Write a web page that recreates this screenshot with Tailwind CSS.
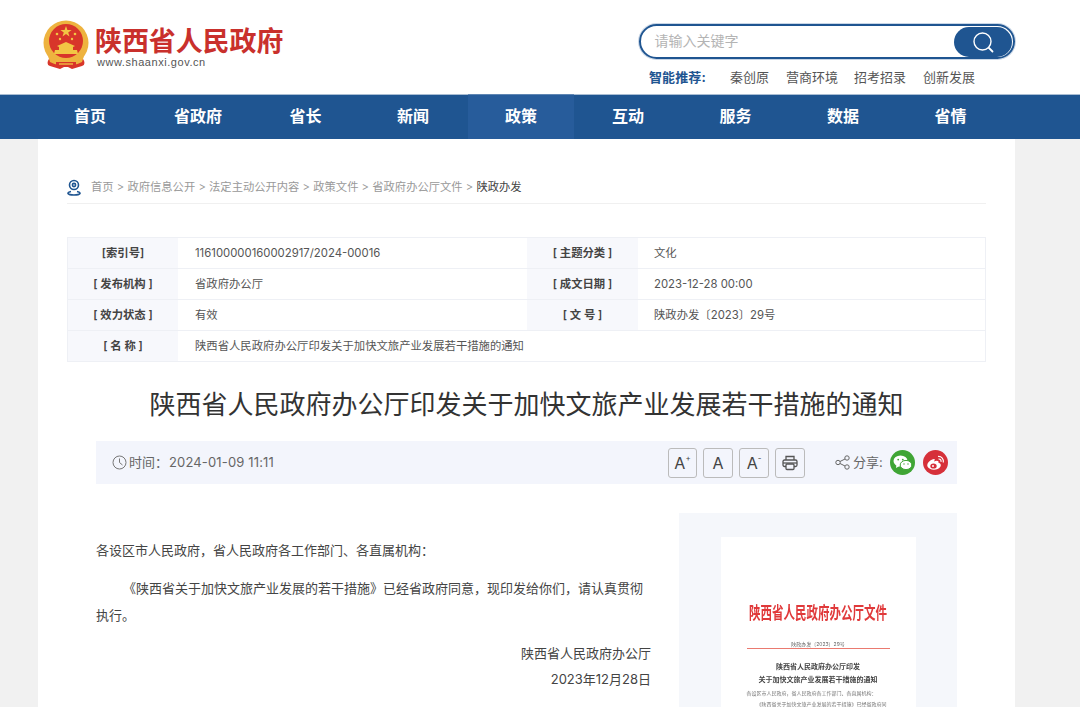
<!DOCTYPE html>
<html lang="zh-CN">

<head>
    <meta charset="UTF-8">
    <title>陕西省人民政府</title>
    <script src="https://cdn.jsdelivr.net/npm/@tailwindcss/browser@4"></script>
</head>

<body class="bg-[#f1f1f1] font-['Inter','Noto_Sans_CJK_SC',sans-serif] text-[#555] h-[707px] overflow-hidden">
    <!-- header -->
    <header class="bg-white h-[94px] flex justify-between pl-[42px] pr-[65px]">
        <div class="flex items-start pt-[20px]">
            <svg class="w-[48px] h-[50px]" viewBox="0 0 48 50">
                <path d="M8 37 Q3 45 8 46 L18 49 L24 46 L30 49 L40 46 Q45 45 40 37 Z" fill="#d8352a" />
                <circle cx="24" cy="23" r="22.5" fill="#eeb33f" />
                <circle cx="24" cy="21" r="17" fill="#d8352a" />
                <path d="M24 6 l1.4 4 4.2 0 -3.4 2.5 1.3 4 -3.5 -2.5 -3.5 2.5 1.3 -4 -3.4 -2.5 4.2 0 z" fill="#f2c644" />
                <circle cx="15" cy="14" r="1.3" fill="#f2c644" />
                <circle cx="33" cy="14" r="1.3" fill="#f2c644" />
                <circle cx="18" cy="19" r="1.2" fill="#f2c644" />
                <circle cx="30" cy="19" r="1.2" fill="#f2c644" />
                <path d="M15 26 L24 22 L33 26 L31 27 L31 30 L35 30 L36 34 L12 34 L13 30 L17 30 L17 27 Z" fill="#f2c644" />
                <path d="M6 36 Q24 48 42 36 L40 42 Q24 50 8 42 Z" fill="#eeb33f" />
                <path d="M14 42 h20 v5 h-20 z" fill="#d8352a" />
                <path d="M17 44 h14" stroke="#eeb33f" stroke-width="1.5" />
            </svg>
            <div class="ml-[5px] pt-[2px]">
                <div class="text-[27px] leading-[40px] font-bold text-[#c9302c] tracking-[-0.1px]">陕西省人民政府</div>
                <div class="font-['Liberation_Sans'] text-[11px] leading-[12px] tracking-[0.55px] text-[#555] ml-[2px] -mt-[6px]">www.shaanxi.gov.cn</div>
            </div>
        </div>
        <div class="pt-[24px] w-[376px]">
            <div class="h-[35px] rounded-full border-[2.5px] border-[#1f5591] shadow-[0_0_0_1px_#c9d6e6] flex items-center justify-between pl-[13.5px] pr-[1px]">
                <span class="text-[14px] leading-[18px] -mt-[2px] text-[#b4b4b4]">请输入关键字</span>
                <span class="w-[58px] h-[30px] rounded-full bg-[#1f5591] flex items-center justify-center">
                    <svg class="w-[24px] h-[24px]" viewBox="0 0 24 24" fill="none" stroke="#fff" stroke-width="1.4">
                        <circle cx="11.5" cy="11.5" r="8.5" />
                        <path d="M18 18 L21.5 21.5" stroke-width="1.8" stroke-linecap="round" />
                    </svg>
                </span>
            </div>
            <div class="flex items-center mt-[9px] ml-[10px] text-[13px] leading-[18px] text-[#555]">
                <span class="font-bold text-[#1f5591] w-[81px] tracking-[0.1px]">智能推荐:</span>
                <span class="w-[56px]">秦创原</span>
                <span class="w-[68px]">营商环境</span>
                <span class="w-[69px]">招考招录</span>
                <span>创新发展</span>
            </div>
        </div>
    </header>

    <!-- nav -->
    <nav class="bg-[#1f5591] h-[45px] border-t border-[#a9bdd3] flex pl-[36px] pb-[2px] text-white font-bold text-[16px]">
        <a class="w-[108px] flex items-center justify-center">首页</a>
        <a class="w-[108px] flex items-center justify-center">省政府</a>
        <a class="w-[107px] flex items-center justify-center">省长</a>
        <a class="w-[109px] pr-px flex items-center justify-center">新闻</a>
        <a class="w-[106px] h-[45px] -mt-[1px] pb-[2px] bg-[#275c9b] border-t border-[#5f86b3] flex items-center justify-center">政策</a>
        <a class="w-[108px] flex items-center justify-center">互动</a>
        <a class="w-[107px] flex items-center justify-center">服务</a>
        <a class="w-[108px] flex items-center justify-center">数据</a>
        <a class="w-[107px] flex items-center justify-center">省情</a>
    </nav>

    <!-- content -->
    <main class="bg-white w-[977px] ml-[38px] h-[568px] overflow-hidden">
        <div class="mx-[29px] pt-[39px] h-[65px]">
            <div class="flex items-center h-[26px] border-b border-[#f0f0f0] pb-[6px] text-[11.3px] text-[#999]">
                <svg class="w-[14px] h-[17px] mr-[10px]" viewBox="0 0 14 17" fill="none" stroke="#1f5591" stroke-width="1.6">
                    <circle cx="7" cy="6" r="4.5" />
                    <circle cx="7" cy="6" r="1.6" />
                    <path d="M4 12.5 Q1 13 1 14.5 Q2 16 7 16 Q12 16 13 14.5 Q13 13 10 12.5" />
                </svg>
                <span>首页 &gt; 政府信息公开 &gt; 法定主动公开内容 &gt; 政策文件 &gt; 省政府办公厅文件 &gt; <b class="font-normal text-[#444]">陕政办发</b></span>
            </div>
        </div>

        <div class="mx-[29px] mt-[33px] grid grid-cols-[110px_349px_111px_1fr] border border-[#eef0f5] text-[11.35px] leading-[30px] text-[#555]">
            <div class="bg-[#f7f8fc] text-center font-semibold text-[#444] border-b border-[#eef0f5]">[索引号]</div>
            <div class="pl-[17px] border-b border-[#eef0f5]">116100000160002917/2024-00016</div>
            <div class="bg-[#f7f8fc] text-center font-semibold text-[#444] border-b border-[#eef0f5] whitespace-pre">[ 主题分类 ]</div>
            <div class="pl-[16px] border-b border-[#eef0f5]">文化</div>

            <div class="bg-[#f7f8fc] text-center font-semibold text-[#444] border-b border-[#eef0f5] whitespace-pre">[ 发布机构 ]</div>
            <div class="pl-[17px] border-b border-[#eef0f5]">省政府办公厅</div>
            <div class="bg-[#f7f8fc] text-center font-semibold text-[#444] border-b border-[#eef0f5] whitespace-pre">[ 成文日期 ]</div>
            <div class="pl-[16px] border-b border-[#eef0f5]">2023-12-28 00:00</div>

            <div class="bg-[#f7f8fc] text-center font-semibold text-[#444] border-b border-[#eef0f5] whitespace-pre">[ 效力状态 ]</div>
            <div class="pl-[17px] border-b border-[#eef0f5]">有效</div>
            <div class="bg-[#f7f8fc] text-center font-semibold text-[#444] border-b border-[#eef0f5] whitespace-pre">[ 文 号 ]</div>
            <div class="pl-[16px] border-b border-[#eef0f5]">陕政办发〔2023〕29号</div>

            <div class="bg-[#f7f8fc] text-center font-semibold text-[#444] whitespace-pre">[ 名 称 ]</div>
            <div class="pl-[17px] col-span-3">陕西省人民政府办公厅印发关于加快文旅产业发展若干措施的通知</div>
        </div>

        <h1 class="text-[26px] leading-[36px] mt-[25px] ml-[29px] w-[919px] text-center font-normal text-[#333]">陕西省人民政府办公厅印发关于加快文旅产业发展若干措施的通知</h1>

        <div class="mx-[58px] mt-[18px] h-[43px] bg-[#f3f5fc] flex items-center pl-[16px] pr-[9px] text-[13px] text-[#666]">
            <svg class="w-[15px] h-[15px] mr-[2px]" viewBox="0 0 15 15" fill="none" stroke="#777" stroke-width="1">
                <circle cx="7.5" cy="7.5" r="6.5" />
                <path d="M7.5 3.5 V7.5 L10.5 10" />
            </svg>
            <span>时间：<span class="tracking-[0.15px] ml-px">2024-01-09 11:11</span></span>
            <div class="ml-auto flex items-center">
                <div class="flex gap-[6px] text-[#444]">
                    <span class="w-[29px] h-[30px] border border-[#bbb] rounded-[3px] flex items-center justify-center text-[16px]">A<sup class="text-[8px] -mt-[2px]">+</sup></span>
                    <span class="w-[30px] h-[30px] border border-[#bbb] rounded-[3px] flex items-center justify-center text-[16px]">A</span>
                    <span class="w-[30px] h-[30px] border border-[#bbb] rounded-[3px] flex items-center justify-center text-[16px]">A<sup class="text-[8px] -mt-[2px]">-</sup></span>
                    <span class="w-[30px] h-[30px] border border-[#bbb] rounded-[3px] flex items-center justify-center">
                        <svg class="w-[16px] h-[16px]" viewBox="0 0 16 16" fill="none" stroke="#555" stroke-width="1.3">
                            <path d="M4 5 V1.5 H12 V5" />
                            <rect x="1" y="5" width="14" height="6.5" rx="1.5" />
                            <path d="M1 8 H15" />
                            <rect x="4" y="9" width="8" height="5.5" rx="1" fill="#f3f5fc" />
                        </svg>
                    </span>
                </div>
                <svg class="w-[15px] h-[15px] ml-[30px] mr-[3px]" viewBox="0 0 15 15" fill="none" stroke="#666" stroke-width="1">
                    <circle cx="3" cy="7.5" r="2.2" />
                    <circle cx="12" cy="3" r="2.2" />
                    <circle cx="12" cy="12" r="2.2" />
                    <path d="M5 6.5 L10 4 M5 8.5 L10 11" />
                </svg>
                <span class="w-[37px]">分享:</span>
                <span class="w-[25px] h-[25px] rounded-full bg-[#3fa535] flex items-center justify-center">
                    <svg class="w-[19px] h-[16px]" viewBox="0 0 19 16" fill="#fff">
                        <ellipse cx="7.5" cy="6" rx="7" ry="5.6" />
                        <path d="M3.5 9.5 L3 13 L6.5 11 Z" />
                        <ellipse cx="13" cy="10" rx="5.8" ry="4.6" stroke="#3fa535" stroke-width="1" />
                        <circle cx="5.2" cy="4.6" r="0.9" fill="#3fa535" />
                        <circle cx="9.8" cy="4.6" r="0.9" fill="#3fa535" />
                        <circle cx="11" cy="9" r="0.7" fill="#3fa535" />
                        <circle cx="15" cy="9" r="0.7" fill="#3fa535" />
                    </svg>
                </span>
                <span class="w-[25px] h-[25px] ml-[8px] rounded-full bg-[#d6303a] flex items-center justify-center">
                    <svg class="w-[19px] h-[16px]" viewBox="0 0 19 16" fill="none">
                        <path d="M8 4 C3 5 0.5 9 1.5 11.5 C3 15.5 12 16 14.5 11.5 C15.5 9.5 14 8 12.5 8 C13 6 11.5 5 8 6.5 C9 4.5 9 3.8 8 4 Z" fill="#fff" />
                        <ellipse cx="7.5" cy="11" rx="3.2" ry="2.6" fill="#d6303a" />
                        <circle cx="7" cy="11" r="1" fill="#fff" />
                        <path d="M12 1.5 C15.5 1.2 18 4 17.3 7.5 M12.5 4 C14.2 3.8 15.4 5 15 6.8" stroke="#fff" stroke-width="1.2" />
                    </svg>
                </span>
            </div>
        </div>

        <div class="flex mx-[58px] mt-[29px] gap-[28px]">
            <div class="w-[555px] text-[13px] text-[#444] pt-[24px]">
                <p class="leading-[26px]">各设区市人民政府，省人民政府各工作部门、各直属机构：</p>
                <p class="leading-[27px] mt-[11.5px] indent-[27px]">《陕西省关于加快文旅产业发展的若干措施》已经省政府同意，现印发给你们，请认真贯彻执行。</p>
                <p class="leading-[26px] mt-[11px] text-right">陕西省人民政府办公厅</p>
                <p class="leading-[26px] text-right">2023年12月28日</p>
            </div>
            <div class="w-[278px] h-[194px] bg-[#f5f7fb] pt-[24px] flex justify-center shrink-0 overflow-hidden">
                <div class="w-[195px] h-[170px] bg-white blur-[0.4px] text-center overflow-hidden">
                    <div class="mt-[66px] text-[#e0393a] text-[11.5px] font-bold leading-[20px] scale-y-[1.5]">陕西省人民政府办公厅文件</div>
                    <div class="mt-[17px] text-[5px] leading-[8px] text-[#666]">陕政办发〔2023〕29号</div>
                    <div class="mx-[26px] h-px bg-[#ea7a70]"></div>
                    <div class="mt-[12px] text-[7px] leading-[12.5px] font-bold text-[#444]">陕西省人民政府办公厅印发<br>关于加快文旅产业发展若干措施的通知</div>
                    <div class="mx-[26px] mt-[2px] text-left text-[5px] leading-[11px] text-[#777] whitespace-nowrap">各设区市人民政府，省人民政府各工作部门、各直属机构：<br><span class="ml-[10px]">《陕西省关于加快文旅产业发展的若干措施》已经省政府同</span></div>
                </div>
            </div>
        </div>
    </main>
</body>

</html>
